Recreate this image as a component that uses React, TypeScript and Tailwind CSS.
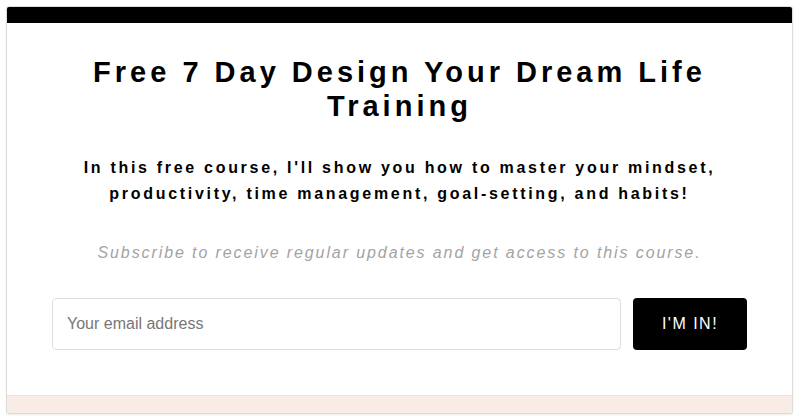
export default function App() {
  return (
    <div className="h-[420px] w-[800px] bg-white pt-[6px] pl-[6px] font-['Liberation_Sans',Arial,sans-serif]">
      <div className="flex h-[408px] w-[787px] flex-col overflow-hidden rounded-[3px] border border-[#dcdcdc] bg-white shadow-[0_1px_2px_rgba(0,0,0,0.08)]">
        <div className="h-[16px] shrink-0 bg-black" />
        <div className="flex flex-1 flex-col items-center pr-[45px] pl-[45px]">
          <h1 className="mt-[32px] text-center text-[29px] leading-[34px] font-bold tracking-[4px] whitespace-nowrap text-black">
            Free 7 Day Design Your Dream Life
            <br />
            Training
          </h1>
          <p className="mt-[32px] text-center text-[16px] leading-[26px] font-bold tracking-[2.7px] whitespace-nowrap text-black">
            In this free course, I'll show you how to master your mindset,
            <br />
            productivity, time management, goal-setting, and habits!
          </p>
          <p className="mt-[34px] text-center text-[16px] leading-[24px] tracking-[1.9px] whitespace-nowrap text-[#a3a3a3] italic">
            Subscribe to receive regular updates and get access to this course.
          </p>
          <div className="mt-[33px] flex w-full gap-[12px]">
            <input
              type="email"
              placeholder="Your email address"
              className="h-[52px] flex-1 rounded-[4px] border border-[#dedede] px-[14px] text-[16px] text-black placeholder:text-[#777] outline-none"
            />
            <button className="h-[52px] w-[114px] rounded-[4px] bg-black text-[16px] tracking-[1.5px] text-white">
              I'M IN!
            </button>
          </div>
        </div>
        <div className="h-[18px] shrink-0 border-t border-[#f2e2dc] bg-[#f9ebe6]" />
      </div>
    </div>
  )
}
